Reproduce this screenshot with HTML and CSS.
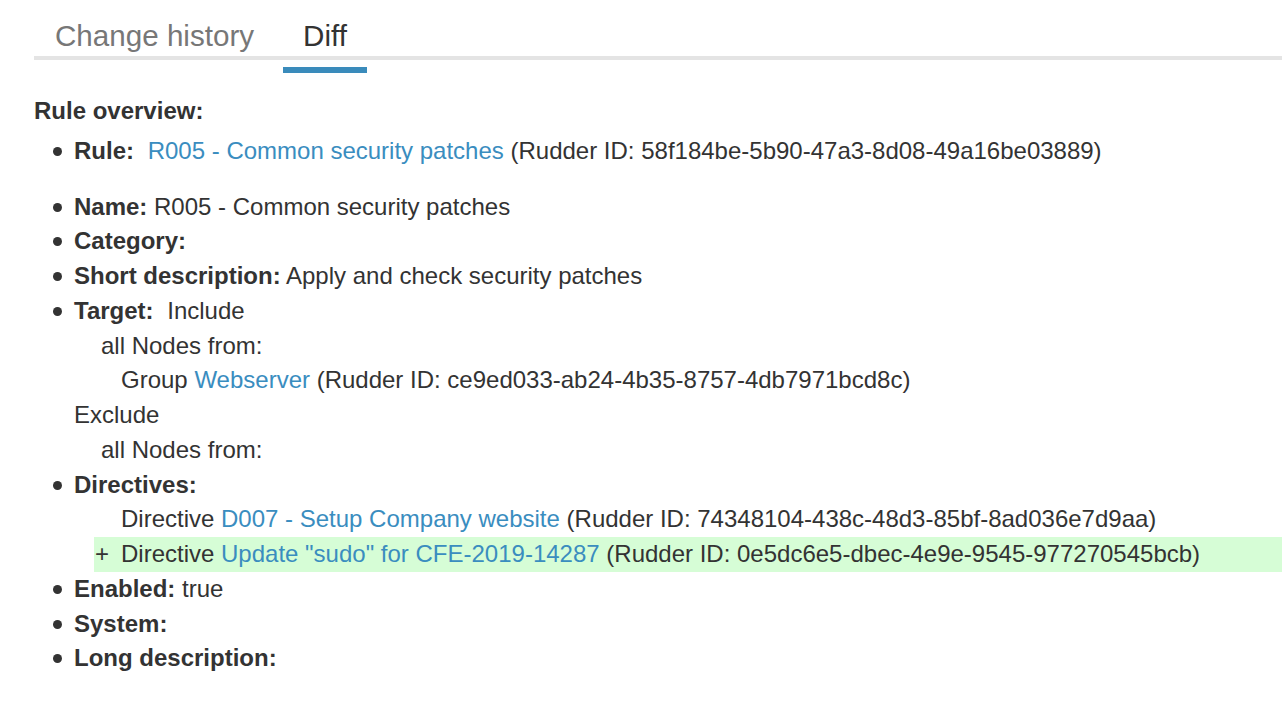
FILE: index.html
```html
<!DOCTYPE html>
<html>
<head>
<meta charset="utf-8">
<link rel="stylesheet" href="styles.css">
</head>
<body>
<div class="page">
  <div class="tabs">
    <div class="tab">Change history</div>
    <div class="tab active">Diff<span class="tab-bar"></span></div>
  </div>
  <div class="content">
    <div class="overview-title">Rule overview:</div>
    <ul class="props">
      <li class="rule-item"><b>Rule:</b> <a class="link">R005 - Common security patches</a> (Rudder ID: 58f184be-5b90-47a3-8d08-49a16be03889)</li>
      <li><b>Name:</b> R005 - Common security patches</li>
      <li><b>Category:</b></li>
      <li><b>Short description:</b> Apply and check security patches</li>
      <li><b>Target:</b> <span class="after-label">Include</span>
        <div class="lvl1">all Nodes from:</div>
        <div class="lvl2">Group <a class="link">Webserver</a> (Rudder ID: ce9ed033-ab24-4b35-8757-4db7971bcd8c)</div>
        <div class="lvl0">Exclude</div>
        <div class="lvl1">all Nodes from:</div>
      </li>
      <li><b>Directives:</b>
        <div class="diff-row"><span class="mark"></span>Directive <a class="link">D007 - Setup Company website</a> (Rudder ID: 74348104-438c-48d3-85bf-8ad036e7d9aa)</div>
        <div class="diff-row added"><span class="mark">+</span>Directive <a class="link">Update "sudo" for CFE-2019-14287</a> (Rudder ID: 0e5dc6e5-dbec-4e9e-9545-977270545bcb)</div>
      </li>
      <li><b>Enabled:</b> true</li>
      <li><b>System:</b></li>
      <li><b>Long description:</b></li>
    </ul>
  </div>
</div>
</body>
</html>
```

FILE: styles.css
```css
html, body {
  margin: 0;
  padding: 0;
  background: #fff;
}
body {
  font-family: "Liberation Sans", Arial, sans-serif;
  font-size: 24px;
  line-height: 34.77px;
  color: #333;
}
.page {
  padding-left: 34px;
}
.tabs {
  display: flex;
  gap: 7px;
  border-bottom: 4px solid #e4e4e4;
  box-sizing: border-box;
  height: 60px;
}
.tab {
  position: relative;
  font-size: 29.6px;
  line-height: 1;
  padding: 21px 21px 0 21px;
  color: #777;
}
.tab.active {
  color: #333;
}
.tab-bar {
  position: absolute;
  left: 1px;
  right: 1px;
  top: 67px;
  height: 6px;
  background: #3a8bbb;
}
.content {
  padding-top: 34px;
}
.overview-title {
  font-weight: bold;
  margin-bottom: 5px;
}
.props {
  margin: 0;
  padding-left: 40px;
  list-style: none;
}
.props > li {
  position: relative;
}
.props > li::before {
  content: "";
  position: absolute;
  left: -21px;
  top: 13px;
  width: 9px;
  height: 9px;
  border-radius: 50%;
  background: #333;
}
.props b {
  font-weight: bold;
}
.rule-item {
  margin-bottom: 21px;
}
.rule-item .link {
  margin-left: 7px;
}
.after-label {
  margin-left: 7px;
}
.link {
  color: #3a8dbf;
  text-decoration: none;
}
.lvl0 {
  margin-left: 0;
}
.lvl1 {
  margin-left: 27px;
}
.lvl2 {
  margin-left: 47px;
}
.diff-row {
  display: flex;
  margin-left: 20px;
  white-space: pre;
}
.diff-row .mark {
  display: inline-block;
  width: 27px;
  flex: none;
  padding-left: 1px;
  box-sizing: border-box;
}
.diff-row.added {
  background: #d6fdd6;
}
```
